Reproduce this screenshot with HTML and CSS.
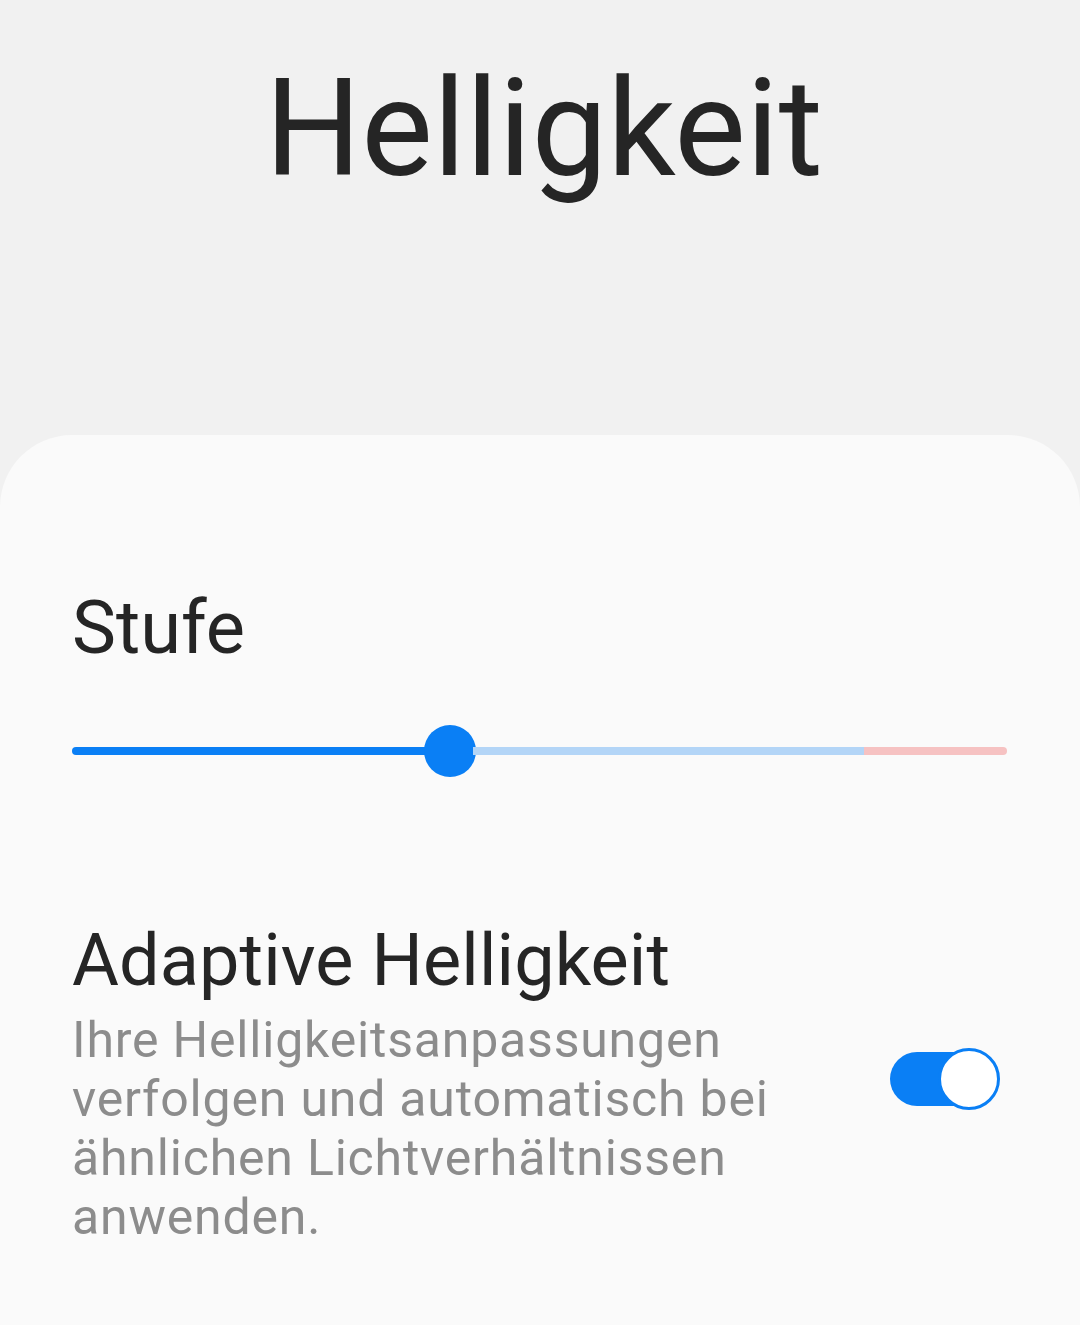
FILE: index.html
```html
<!DOCTYPE html>
<html lang="de">
<head>
    <meta charset="UTF-8">
    <meta name="viewport" content="width=device-width, initial-scale=1.0">
    <title>Helligkeit</title>
    <link rel="stylesheet" href="styles.css">
</head>
<body>
    <header class="page-header">
        <h1 class="page-title">Helligkeit</h1>
    </header>

    <main class="card">
        <section class="level">
            <h2 class="level-title">Stufe</h2>
            <div class="slider">
                <div class="slider-fill"></div>
                <div class="slider-thumb"></div>
                <div class="slider-rest"></div>
                <div class="slider-high"></div>
            </div>
        </section>

        <section class="adaptive">
            <div class="adaptive-text">
                <h2 class="adaptive-title">Adaptive Helligkeit</h2>
                <p class="adaptive-desc">Ihre Helligkeitsanpassungen verfolgen und automatisch bei ähnlichen Lichtverhältnissen anwenden.</p>
            </div>
            <div class="switch">
                <div class="switch-knob"></div>
            </div>
        </section>
    </main>
</body>
</html>
```

FILE: styles.css
```css
body {
    margin: 0;
    background-color: #f1f1f1;
    font-family: 'Roboto', 'Noto Sans', sans-serif;
    color: #252525;
    height: 1325px;
    overflow: hidden;
}

.page-header {
    height: 435px;
    display: flex;
    justify-content: center;
}

.page-title {
    margin: 49px 0 0 8px;
    font-size: 135px;
    font-weight: 400;
    line-height: 160px;
}

.card {
    background-color: #fafafa;
    border-radius: 72px 72px 0 0;
    height: 890px;
    padding: 0 72px;
}

.level {
    padding-top: 148px;
}

.level-title {
    margin: 0;
    font-size: 74px;
    font-weight: 400;
    line-height: 90px;
}

.slider {
    display: flex;
    align-items: center;
    height: 52px;
    margin-top: 52px;
    margin-right: 1px;
}

.slider-fill {
    width: 354px;
    height: 8px;
    background-color: #0a7ff5;
    border-radius: 4px 0 0 4px;
}

.slider-thumb {
    width: 52px;
    height: 52px;
    border-radius: 50%;
    background-color: #0a7ff5;
    flex-shrink: 0;
    margin: 0 -3px 0 -2px;
}

.slider-rest {
    width: 391px;
    height: 8px;
    background-color: #b3d5f7;
}

.slider-high {
    flex: 1;
    height: 8px;
    background-color: #f6c2c2;
    border-radius: 0 4px 4px 0;
}

.adaptive {
    display: flex;
    align-items: flex-start;
    margin-top: 142px;
}

.adaptive-text {
    flex: 1;
}

.adaptive-title {
    margin: 0;
    font-size: 72px;
    font-weight: 400;
    line-height: 84px;
    letter-spacing: 0.1px;
}

.adaptive-desc {
    margin: 8px 0 0;
    font-size: 50px;
    line-height: 59px;
    letter-spacing: 0.8px;
    color: #8c8c8c;
    width: 740px;
}

.switch {
    position: relative;
    width: 108px;
    height: 54px;
    margin: 133px 10px 0 0;
    background-color: #0a7ff5;
    border-radius: 27px;
}

.switch-knob {
    position: absolute;
    right: -2px;
    top: -4px;
    width: 56px;
    height: 56px;
    border: 3px solid #0a7ff5;
    border-radius: 50%;
    background-color: #ffffff;
}
```
